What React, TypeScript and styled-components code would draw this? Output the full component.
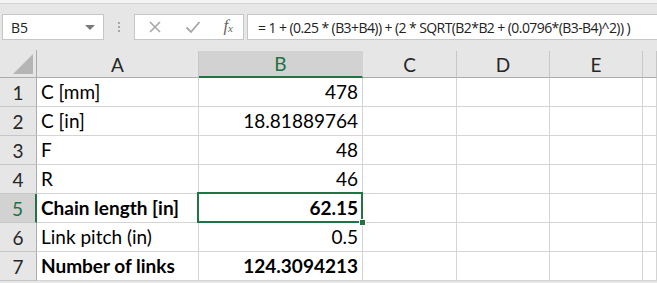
import React from 'react';
import styled, {createGlobalStyle} from 'styled-components';

const GREEN = '#217346';

type CellData = {
    label: string
    value: string
    bold?: boolean
}

const rows: CellData[] = [
    {label: 'C [mm]', value: '478'},
    {label: 'C [in]', value: '18.81889764'},
    {label: 'F', value: '48'},
    {label: 'R', value: '46'},
    {label: 'Chain length [in]', value: '62.15', bold: true},
    {label: 'Link pitch (in)', value: '0.5'},
    {label: 'Number of links', value: '124.3094213', bold: true},
];

const columns = ['A', 'B', 'C', 'D', 'E', ''];
const SELECTED_ROW = 5;
const SELECTED_COL = 'B';

const GlobalStyle = createGlobalStyle`
    html, body {
        margin: 0;
        padding: 0;
        background: #ffffff;
        overflow: hidden;
    }
`

export default function App() {
    return (
        <Sheet>
            <GlobalStyle/>
            <TopStrip/>
            <FormulaBar>
                <NameBox>
                    <span>B5</span>
                    <DropArrow/>
                </NameBox>
                <Grip>
                    <i/><i/><i/>
                </Grip>
                <FxBox>
                    <svg width="14" height="14" viewBox="0 0 14 14">
                        <path d="M2 2 L12 12 M12 2 L2 12" stroke="#a6a6a6" strokeWidth="1.6" fill="none"/>
                    </svg>
                    <svg width="16" height="14" viewBox="0 0 16 14">
                        <path d="M1.5 7.5 L6 12 L14.5 2" stroke="#a6a6a6" strokeWidth="1.8" fill="none"/>
                    </svg>
                    <FxLabel>f<sub>x</sub></FxLabel>
                </FxBox>
                <FormulaInput>= 1 + (0.25 * (B3+B4)) + (2 * SQRT(B2*B2 + (0.0796*(B3-B4)^2)) )</FormulaInput>
            </FormulaBar>
            <Grid>
                <Corner>
                    <svg width="20" height="20" viewBox="0 0 20 20">
                        <path d="M20 0 L20 20 L0 20 Z" fill="#b5b5b5"/>
                    </svg>
                </Corner>
                {columns.map((c, i) =>
                    <ColHeader key={'h' + i} $active={c === SELECTED_COL}>{c}</ColHeader>
                )}
                {rows.map((r, i) => {
                    const n = i + 1;
                    const active = n === SELECTED_ROW;
                    return (
                        <React.Fragment key={n}>
                            <RowHeader $active={active}>{n}</RowHeader>
                            <Cell $bold={r.bold}>{r.label}</Cell>
                            <Cell $bold={r.bold} $right $selected={active}>
                                {r.value}
                                {active && <FillHandle/>}
                            </Cell>
                            <Cell/>
                            <Cell/>
                            <Cell/>
                            <Cell/>
                        </React.Fragment>
                    )
                })}
            </Grid>
        </Sheet>
    );
}

const Sheet = styled.div`
    width: 657px;
    height: 283px;
    overflow: hidden;
    background: #e6e6e6;
    font-family: Lato, "Liberation Sans", sans-serif;
`

const TopStrip = styled.div`
    height: 3px;
    background: #f3f3f3;
    border-bottom: 1px solid #d4d4d4;
`

const FormulaBar = styled.div`
    display: flex;
    align-items: center;
    height: 26px;
    padding: 10px 0 10px 2px;
    font-family: "Open Sans", "Noto Sans", sans-serif;
`

const NameBox = styled.div`
    box-sizing: border-box;
    flex: 0 0 102px;
    height: 26px;
    background: #fff;
    border: 1px solid #c6c6c6;
    display: flex;
    align-items: center;
    justify-content: space-between;
    padding: 0 8px 0 8px;
    font-size: 14px;
    color: #222;
`

const DropArrow = styled.div`
    width: 0;
    height: 0;
    border-left: 5px solid transparent;
    border-right: 5px solid transparent;
    border-top: 5px solid #7a7a7a;
`

const Grip = styled.div`
    flex: 0 0 30px;
    display: flex;
    flex-direction: column;
    align-items: center;
    gap: 2px;

    i {
        display: block;
        width: 2px;
        height: 2px;
        background: #a6a6a6;
    }
`

const FxBox = styled.div`
    box-sizing: border-box;
    flex: 0 0 110px;
    height: 26px;
    background: #fff;
    border: 1px solid #c6c6c6;
    display: flex;
    align-items: center;
    justify-content: space-between;
    padding: 0 10px 0 13px;
`

const FxLabel = styled.span`
    font-family: "Liberation Serif", serif;
    font-style: italic;
    font-size: 17px;
    color: #666;
    margin-top: -2px;

    sub {
        font-size: 11px;
        vertical-align: -1px;
    }
`

const FormulaInput = styled.div`
    box-sizing: border-box;
    flex: 1 1 0;
    min-width: 0;
    overflow: hidden;
    height: 26px;
    margin-left: 3px;
    background: #fff;
    border: 1px solid #c6c6c6;
    border-right: none;
    display: flex;
    align-items: center;
    padding-left: 10px;
    font-size: 14px;
    letter-spacing: -0.58px;
    color: #222;
    white-space: nowrap;
`

const Grid = styled.div`
    display: grid;
    grid-template-columns: 37px 162px 164px 94px 93px 93px 14px;
    grid-template-rows: 28px repeat(7, 29px);
`

const Corner = styled.div`
    box-sizing: border-box;
    border-right: 1px solid #ababab;
    border-bottom: 1px solid #ababab;
    display: flex;
    align-items: flex-end;
    justify-content: flex-end;
    padding: 0 3px 3px 0;
`

const ColHeader = styled.div<{ $active?: boolean }>`
    box-sizing: border-box;
    display: flex;
    align-items: center;
    justify-content: center;
    font-size: 19px;
    color: ${p => p.$active ? GREEN : '#262626'};
    background: ${p => p.$active ? '#d2d2d2' : '#e6e6e6'};
    border-right: 1px solid ${p => p.$active ? '#d2d2d2' : '#c6c6c6'};
    border-bottom: ${p => p.$active ? `2px solid ${GREEN}` : '1px solid #ababab'};
    margin-top: 1px;
`

const RowHeader = styled.div<{ $active?: boolean }>`
    box-sizing: border-box;
    display: flex;
    align-items: center;
    justify-content: center;
    font-size: 19px;
    color: ${p => p.$active ? GREEN : '#262626'};
    background: ${p => p.$active ? '#d2d2d2' : '#e6e6e6'};
    border-right: ${p => p.$active ? `2px solid ${GREEN}` : '1px solid #ababab'};
    border-bottom: 1px solid #c6c6c6;
`

const Cell = styled.div<{ $bold?: boolean, $right?: boolean, $selected?: boolean }>`
    box-sizing: border-box;
    position: relative;
    background: #fff;
    border-right: 1px solid #d4d4d4;
    border-bottom: 1px solid #d4d4d4;
    display: flex;
    align-items: flex-end;
    justify-content: ${p => p.$right ? 'flex-end' : 'flex-start'};
    padding: 0 4px 3px 4px;
    font-size: 19px;
    font-weight: ${p => p.$bold ? 700 : 400};
    color: #000;
    white-space: nowrap;

    ${p => p.$selected && `
        &::after {
            content: '';
            position: absolute;
            left: -2px;
            top: -2px;
            right: -1px;
            bottom: -1px;
            border: 2px solid ${GREEN};
            pointer-events: none;
        }
    `}
`

const FillHandle = styled.div`
    position: absolute;
    right: -4px;
    bottom: -4px;
    width: 5px;
    height: 5px;
    background: ${GREEN};
    border: 1px solid #fff;
    z-index: 2;
`
